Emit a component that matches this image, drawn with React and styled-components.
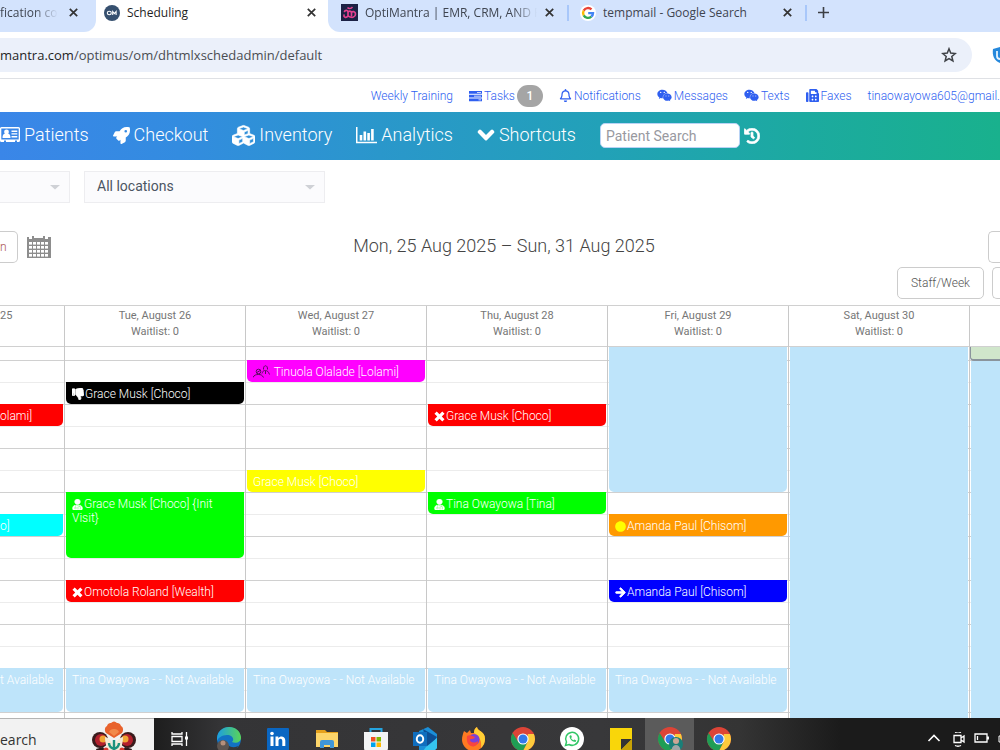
import React from "react";
import styled, { createGlobalStyle, css } from "styled-components";
import { FaRocket, FaCubes, FaChevronDown, FaHistory, FaRegBell, FaWeixin, FaFax, FaThumbsDown, FaUserMd, FaCircle, FaArrowRight } from "react-icons/fa";

const Global = createGlobalStyle`
  *, *::before, *::after { box-sizing: border-box; }
  body { margin: 0; background: #fff; font-family: Roboto, "Liberation Sans", sans-serif; }
  button, input, select { font: inherit; color: inherit; margin: 0; padding: 0; border: 0; background: none; }
  a { text-decoration: none; color: inherit; }
  svg { display: block; flex: none; }
`;

const Screen = styled.div`
  display: flex;
  flex-direction: column;
  min-height: 100vh;
  overflow: hidden;
`;

/* ---------- browser chrome ---------- */

const TabStrip = styled.div`
  display: flex;
  height: 32px;
  font-family: "Open Sans", "Noto Sans", sans-serif;
  font-size: 12px;
  color: #3f4550;
`;

const StripPart = styled.div`
  display: flex;
  align-items: center;
  background: #d3e3fd;
  padding-bottom: 7px;
  border-radius: ${(p) => (p.$side === "left" ? "0 0 12px 0" : "0 0 0 12px")};
  ${(p) => (p.$side === "left" ? "width: 96px; padding-right: 16px;" : "flex: 1; min-width: 0; padding-left: 13px;")}
`;

const ActiveTab = styled.div`
  display: flex;
  align-items: center;
  width: 232px;
  padding: 0 10px 7px 8px;
  color: #1f1f1f;
  background: #fff;
  border-radius: 6px 6px 0 0;
`;

const TabTitle = styled.span`
  flex: ${(p) => (p.$width ? "none" : "1")};
  width: ${(p) => (p.$width ? p.$width + "px" : "auto")};
  min-width: 0;
  margin-left: ${(p) => (p.$flush ? "0" : "7px")};
  overflow: hidden;
  white-space: nowrap;
  line-height: 18px;
  ${(p) => p.$fade && css`mask-image: linear-gradient(90deg, #000 ${p.$fade}px, transparent ${p.$fade + 24}px);`}
`;

const IconButton = styled.button`
  display: flex;
  align-items: center;
  justify-content: center;
  width: 14px;
  height: 18px;
  flex: none;
  color: #333;
`;

const Divider = styled.span`
  width: 2px;
  height: 16px;
  margin: 0 ${(p) => p.$after}px 0 11px;
  background: #a8c7fa;
`;

const Favicon = styled.span`
  display: flex;
  flex: none;
`;

const Toolbar = styled.div`
  display: flex;
  align-items: center;
  justify-content: space-between;
  height: 47px;
  border-bottom: 1px solid #dfe1e5;
  font-family: "Open Sans", "Noto Sans", sans-serif;
  font-size: 13px;
`;

const Omnibox = styled.div`
  display: flex;
  align-items: center;
  flex: 1;
  height: 34px;
  margin-right: 20px;
  padding-right: 16px;
  background: #ebf0fa;
  border-radius: 0 17px 17px 0;
  color: #1f1f1f;
`;

const UrlPath = styled.input`
  flex: 1;
  min-width: 0;
  color: #4a4d52;
  outline: none;
`;

/* ---------- application header ---------- */

const LinkBar = styled.nav`
  display: flex;
  align-items: center;
  justify-content: flex-end;
  gap: 16px;
  height: 33px;
  font-size: 12px;
  font-weight: 300;
  color: #2f5ff0;
  white-space: nowrap;
`;

const TopLink = styled.a`
  display: flex;
  align-items: center;
  gap: 2px;
`;

const Badge = styled.span`
  width: 26px;
  line-height: 22px;
  border-radius: 11px;
  background: #a5a5a5;
  color: #fff;
  font-weight: 500;
  text-align: center;
`;

const MainNav = styled.nav`
  display: flex;
  align-items: center;
  gap: 24px;
  height: 48px;
  padding-bottom: 1px;
  font-size: 18px;
  font-weight: 300;
  color: #fff;
  background: linear-gradient(90deg, #3a86e8 0%, #338ce0 18%, #2a97cb 38%, #22a1b8 60%, #1caaa0 80%, #19b18d 100%);
`;

const NavLink = styled.a`
  display: flex;
  align-items: center;
  gap: 4px;
  line-height: 20px;
  padding-bottom: 1px;
`;

const PatientSearch = styled.form`
  display: flex;
  align-items: center;
  gap: 4px;
  input {
    width: 140px;
    height: 25px;
    padding: 0 5px;
    border: 1px solid #b9d3f5;
    border-radius: 5px;
    background: #fff;
    font-size: 14px;
    font-weight: 400;
  }
  input::placeholder { color: #98999f; opacity: 1; }
`;

/* ---------- filters and calendar toolbar ---------- */

const Filters = styled.div`
  display: flex;
  gap: 14px;
  padding-top: 11px;
`;

const Picker = styled.label`
  display: grid;
  align-items: center;
  width: ${(p) => p.$width}px;
  height: 32px;
  background: #fbfbfd;
  border: 1px solid #ededf0;
  border-left-width: ${(p) => (p.$cut ? 0 : 1)}px;
  > * { grid-area: 1 / 1; }
  svg { justify-self: end; margin-right: 9px; pointer-events: none; }
`;

const Select = styled.select`
  appearance: none;
  width: 100%;
  height: 30px;
  padding: 0 12px 2px;
  font-size: 14px;
  color: #4b5563;
`;

const CalendarBar = styled.div`
  display: grid;
  grid-template-columns: 1fr auto 1fr;
  align-items: center;
  margin-top: 28px;
`;

const BarSide = styled.div`
  display: flex;
  align-items: center;
  gap: 9px;
  justify-content: ${(p) => (p.$end ? "flex-end" : "flex-start")};
`;

const RangeTitle = styled.h1`
  margin: 0;
  padding: 0 0 2px 8px;
  font-size: 18px;
  font-weight: 300;
  line-height: 22px;
  color: #444;
`;

const OutlineButton = styled.button`
  width: ${(p) => p.$width}px;
  height: 32px;
  border: 1px solid #ccc;
  border-radius: 5px;
  font-size: 12px;
  font-weight: 300;
  color: #555;
  text-align: center;
  ${(p) => p.$cut === "left" && css`border-left: 0; border-radius: 0 5px 5px 0; text-align: left; color: #a55;`}
  ${(p) => p.$cut === "right" && css`border-right: 0; border-radius: 5px 0 0 5px;`}
`;

const ViewRow = styled.div`
  display: flex;
  justify-content: flex-end;
  gap: 8px;
  margin: 4px 0 6px;
`;

/* ---------- calendar ---------- */

const Week = styled.main`
  display: grid;
  grid-template-columns: 65fr repeat(5, 181fr) 30fr;
  border-top: 1px solid #d0d0d0;
`;

const Day = styled.section`
  min-width: 0;
  overflow: hidden;
  border-right: 1px solid #c8c8c8;
  &:last-child { border-right: 0; }
`;

const DayHead = styled.header`
  height: 41px;
  padding-top: 2px;
  border-bottom: 1px solid #d0d0d0;
  font-size: 11px;
  line-height: 16px;
  color: #767676;
  text-align: ${(p) => (p.$cut ? "left" : "center")};
  white-space: nowrap;
`;

const DayBody = styled.div`
  display: grid;
  grid-template-rows: 14px repeat(16, 22px) 5px;
  grid-template-columns: minmax(0, 1fr);
`;

const Slot = styled.div`
  grid-column: 1;
  grid-row: ${(p) => p.$row};
  border-bottom: ${(p) => (p.$row > 17 ? "0" : "1px")} solid ${(p) => (p.$row % 2 ? "#d0d0d0" : "#ececec")};
`;

const Event = styled.article`
  z-index: 1;
  grid-column: 1;
  grid-row: ${(p) => p.$row} / span ${(p) => p.$span || 1};
  margin: ${(p) => (p.$row === 1 ? "0 1px 1px" : "-1px 1px 1px")};
  padding: 5px 6px 0;
  overflow: hidden;
  border-radius: 0 0 5px 5px;
  background: ${(p) => p.$color};
  color: #fff;
  font-size: 12px;
  font-weight: 300;
  line-height: 14px;
  ${(p) => p.$cut && css`margin-left: 0; padding-left: 0; border-radius: 0 0 5px 0; white-space: nowrap;`}
  ${(p) => p.$full && css`margin-bottom: 0; border-radius: 0;`}
  ${(p) => p.$bleed && css`margin-right: 0; margin-top: 0;`}
  svg { display: inline-block; vertical-align: -2px; margin-right: 1px; }
`;

const ClosedStrip = styled.div`
  z-index: 1;
  grid-column: 1;
  grid-row: 1;
  background: #d0e6cb;
  border: solid #8a949c;
  border-width: 0 0 2px 1px;
  border-radius: 0 0 0 4px;
`;

/* ---------- desktop taskbar ---------- */

const Taskbar = styled.footer`
  display: flex;
  height: 32px;
  overflow: hidden;
  background: linear-gradient(90deg, #1c1c1c 15%, #343436 22%, #38383a 60%, #343434 74%, #1b1b1b 84%);
  font-family: "Open Sans", "Noto Sans", sans-serif;
`;

const SearchBox = styled.button`
  display: flex;
  justify-content: space-between;
  width: 154px;
  flex: none;
  padding: 2px 18px 0 0;
  background: #f2f2f2;
  border-top: 1px solid #b4b4b4;
  color: #333;
  font-size: 14px;
  line-height: 38px;
`;

const Apps = styled.div`
  display: flex;
  flex: none;
  padding-left: 1px;
`;

const TaskItem = styled.button`
  display: flex;
  justify-content: center;
  flex: none;
  width: 49px;
  height: 40px;
  padding-top: 9px;
  background: ${(p) => (p.$active ? "#5b5b5b" : "transparent")};
`;

const Tray = styled.div`
  display: flex;
  gap: 8px;
  margin-left: auto;
  padding-top: 14px;
`;

/* ---------- drawings ---------- */

const Cross = () => (
  <svg width="9" height="9" viewBox="0 0 9 9" stroke="currentColor" strokeWidth="1.7"><path d="M.8.8l7.4 7.4M8.2.8L.8 8.2" /></svg>
);
const Cancelled = () => (
  <svg width="11" height="11" viewBox="0 0 11 11" stroke="currentColor" strokeWidth="3.2"><path d="M1.600 1.600l7.800 7.800M9.400 1.600L1.600 9.400" /></svg>
);
const OmRound = () => (
  <svg width="16" height="16" viewBox="0 0 16 16"><circle cx="8" cy="8" r="8" fill="#36506f" /><ellipse cx="5.3" cy="8" rx="2" ry="1.7" fill="none" stroke="#fff" strokeWidth="1.1" /><path d="M8.7 10V6.5l1.7 2.2 1.7-2.2V10" fill="none" stroke="#fff" strokeWidth="1.1" /></svg>
);
const OmSquare = () => (
  <svg width="17" height="17" viewBox="0 0 17 17"><path fill="#1b2145" d="M0 0h17v17H0z" /><path d="M3.500 7.500c.5-1.500 3.500-1.500 3.500.5V12c-2 2.500-4.500 1-4-1M7 8.500c.5-2 3.500-2 3.500.5v2.500M10.500 9c.5-2.500 4-1.500 4 1 0 3-3 4.500-7.500 2" fill="none" stroke="#e2408f" strokeWidth="1.700" strokeLinecap="round" /><path d="M6.500 3.500c1 1.500 3.500 1.500 5-.5" fill="none" stroke="#e2408f" strokeWidth="1.400" /></svg>
);
const Google = () => (
  <svg width="16" height="16" viewBox="0 0 16 16"><circle cx="8" cy="8" r="8" fill="#fff" /><g fill="none" strokeWidth="2.400"><path stroke="#ea4335" d="M3.700 5.600A5 5 0 0 1 11.500 4.400" /><path stroke="#fbbc05" d="M3.700 5.600a5 5 0 0 0 0 4.800" /><path stroke="#34a853" d="M3.700 10.400a5 5 0 0 0 7.600 1.300" /><path stroke="#4285f4" d="M11.300 11.700A5 5 0 0 0 13 8.100H8.200" /></g></svg>
);
const Plus = () => (
  <svg width="11" height="11" viewBox="0 0 11 11" stroke="#3c3f44" strokeWidth="1.600"><path d="M5.500 0v11M0 5.500h11" /></svg>
);
const Star = () => (
  <svg width="16" height="16" viewBox="0 0 16 16" fill="none" stroke="#3f4247" strokeWidth="1.500"><path d="M8 1.800l1.700 4.300 4.600.4-3.500 3 1.100 4.500L8 11.600 4.100 14l1.100-4.500-3.500-3 4.600-.4z" /></svg>
);
const Shield = () => (
  <svg width="8" height="18" viewBox="0 0 8 18"><path d="M8 1L1 3C0 9 2 15 8 17z" fill="#2588dc" /><path d="M5 5v5c0 2 1.500 3 3 3" fill="none" stroke="#e4f3ff" strokeWidth="1.800" /></svg>
);
const TasksIcon = () => (
  <svg width="13" height="12" viewBox="0 0 13 12" fill="currentColor"><path d="M0 1h13v2.800H0zM0 4.700h13v2.800H0zM0 8.400h13v2.800H0z" /><path d="M8 2h4v.8H8zM5 5.700h7v.8H5zM9.500 9.400H12v.8H9.500z" fill="#fff" /></svg>
);
const CardIcon = () => (
  <svg width="20" height="16" viewBox="0 0 20 16" fill="currentColor"><path d="M1.500 0h17A1.500 1.500 0 0 1 20 1.500v12a1.500 1.500 0 0 1-1.500 1.500H17v-1.500h-2V15H6v-1.500H4V15H1.500A1.500 1.500 0 0 1 0 13.500v-12A1.500 1.500 0 0 1 1.500 0zM1.300 1.500v11h17.400v-11z" fillRule="evenodd" /><circle cx="6.500" cy="5" r="2.400" /><path d="M2.500 11c0-3 1-4.300 2.500-4.300h3c1.500 0 2.500 1.300 2.500 4.300zM11.500 3.500h5.800v1.400h-5.800zM11.500 6.200h5.800v1.400h-5.800zM11.500 9h5.800v1.400h-5.800z" /></svg>
);
const ChartIcon = () => (
  <svg width="21" height="17" viewBox="0 0 21 17" fill="currentColor"><path d="M0 0h1.500v14.800H21v1.500H0zM3.700 8h2.600v5.500H3.700zM7.500 4.500h2.600v9H7.500zM11.300 6h2.600v7.500h-2.600zM15.100 2h2.600v11.500h-2.600z" /></svg>
);
const Triangle = () => (
  <svg width="10" height="6" viewBox="0 0 10 6"><path d="M0 1h10L5 5.500z" fill="#cfd1d6" /></svg>
);
const CalendarIcon = () => (
  <svg width="24" height="22" viewBox="0 0 24 22"><path fill="#8d8d8d" d="M0 1h2v2h3V0h2v2h9V0h2v3h3V1h3v21H0z" /><g fill="#fff">{[7, 11, 15, 19].map((y) => [2, 6, 10, 14, 18].map((x) => <path key={x + "-" + y} d={`M${x} ${y - 1}h3v2.600h-3z`} />))}</g></svg>
);
const PeopleIcon = () => (
  <svg width="17" height="13" viewBox="0 0 17 13" fill="none" stroke="#5a1060" strokeWidth="1"><circle cx="5.500" cy="6.500" r="2.300" /><path d="M0 12.500c1-2.500 3-3 5.500-3s4 .8 5 3M10.500 4.500c-.5-5 4.500-5 4 0M9 8.500c1-3 2-3 3.500-3s3 1 4 4M12.500 6v3M3 8l5-3" /></svg>
);
const Flowers = () => (
  <svg width="44" height="34" viewBox="0 0 44 34"><circle cx="8" cy="19" r="8" fill="#3a1b1c" /><circle cx="36" cy="19" r="8" fill="#3a1b1c" /><circle cx="9" cy="19" r="6" fill="#b3202d" /><circle cx="35" cy="19" r="6" fill="#b3202d" /><circle cx="11" cy="18" r="3.500" fill="#f0a534" /><circle cx="33" cy="18" r="3.500" fill="#f0a534" /><path d="M13 16c5 1 8 6 9 12 1-6 4-11 9-12 0 9-3 14-9 18-6-4-9-9-9-18z" fill="#f3ead7" /><path d="M14 12c-2-3-1-6 1-7 1-3 3-3 4-3 2-2 4-2 6 0 1 0 3 0 4 3 2 1 3 4 1 7l-8 5z" fill="#e8622c" /><path d="M17 11c1-4 9-4 10 0l-5 4z" fill="#f28a4b" /><path d="M22 34V19m0 9c-3-1-5-3-5-6m5 6c3-1 5-3 5-6" stroke="#1d917d" strokeWidth="2.400" fill="none" /><path d="M4 28l7-2 5 8H6zM40 28l-7-2-5 8h10z" fill="#2c1a1c" /><circle cx="14" cy="29" r="2.500" fill="#d8382f" /><circle cx="30" cy="29" r="2.500" fill="#d8382f" /></svg>
);
const TaskView = () => (
  <svg width="18" height="22" viewBox="0 -3 18 22" fill="none" stroke="#fff" strokeWidth="1.300"><path d="M1 2v2h10V2M1 16v-2h10v2M1 6.500h10v5H1zM15.500 2v14" /><path d="M14 6.500h3v3h-3z" fill="#fff" stroke="none" /></svg>
);
const Edge = () => (
  <svg width="24" height="24" viewBox="0 0 24 24"><defs><linearGradient id="edge" x1="0" x2="1"><stop stopColor="#1b9de2" /><stop offset="1" stopColor="#5ad557" /></linearGradient></defs><circle cx="12" cy="12" r="12" fill="#1272c4" /><path d="M0 11C1-3 22-4 24 10c.5 5-5 7-9 5 3-3 0-7-5-7S1 11 0 14z" fill="url(#edge)" /><path d="M10 13c-1 6 5 9 11 6l-2 5h-9z" fill="#38383a" /><circle cx="6" cy="19" r="6" fill="#5d5551" /><circle cx="6" cy="16" r="2.500" fill="#b58f7b" /></svg>
);
const LinkedIn = () => (
  <svg width="22" height="24" viewBox="0 0 22 24" fill="#fff"><path fill="#0a66c2" d="M1 1h20a1 1 0 0 1 1 1v22H0V2a1 1 0 0 1 1-1z" /><circle cx="5" cy="6.500" r="1.800" /><path d="M3.500 9.500h3V19h-3zM8.500 9.500h2.800V11c1.800-2.600 7-2.200 7 2.500V19h-3v-5c0-3-3.800-3-3.800 0v5h-3z" /></svg>
);
const Explorer = () => (
  <svg width="22" height="24" viewBox="0 0 22 24"><path d="M0 3h9l2 2h11v15H0z" fill="#e5a11c" /><path d="M0 6h22v14H0z" fill="#fcd56a" /><path d="M4 21v-6q0-2 2-2h10q2 0 2 2v6h-4v-3H8v3z" fill="#3f96d8" /></svg>
);
const Store = () => (
  <svg width="24" height="24" viewBox="0 0 24 24"><path d="M6.500 6V2h11v4" fill="none" stroke="#25a4df" strokeWidth="2" /><path d="M0 5h24v16q0 3-3 3H3q-3 0-3-3z" fill="#f3f4f5" /><path d="M7 10h4.500v4.500H7z" fill="#f25022" /><path d="M12.500 10H17v4.500h-4.500z" fill="#7fba00" /><path d="M7 15.500h4.500V20H7z" fill="#00a4ef" /><path d="M12.500 15.500H17V20h-4.500z" fill="#ffb900" /></svg>
);
const Outlook = () => (
  <svg width="24" height="24" viewBox="0 0 24 24"><path d="M6 4l9-4 9 7v14l-3 3H6z" fill="#1b8fd8" /><path d="M10 2l14 8-9 12z" fill="#0d4f95" /><path d="M13 20l11-9v10l-3 3H10z" fill="#35c4ee" /><path d="M0 5h14v14H0z" fill="#106ebe" /><ellipse cx="7" cy="12" rx="3.200" ry="3.700" fill="none" stroke="#fff" strokeWidth="2" /></svg>
);
const Firefox = () => (
  <svg width="24" height="24" viewBox="0 0 24 24"><path d="M2 4l3 2 3-3 1 3h3c0-3 1-5 3-6 0 4 8 4 8 12a11.500 11.500 0 0 1-23 1C0 9 1 7 2 4z" fill="#ff7a22" /><path d="M15 0c0 4 8 4 8 12 0 4-2 7-4 9 1-6-1-12-7-15 0-3 1-5 3-6z" fill="#ffcf35" /><circle cx="12" cy="12.500" r="5.500" fill="#7a41d9" /><path d="M5 9c3-2 5 0 8 1-1 3-5 1-5 3s4 4 8 1c0 8-13 8-11-5z" fill="#f9453f" /></svg>
);
const Chrome = ({ avatar }) => (
  <svg width="26" height="24" viewBox="-1 0 26 24"><circle cx="12" cy="12" r="12" fill="#dc4437" /><path d="M1.600 6A12 12 0 0 0 12 24l4.800-9.200L12 12 7.200 14.800z" fill="#1f9d55" /><path d="M12 24l4.800-9.200V7h6.100A12 12 0 0 1 12 24z" fill="#fdcb3c" /><circle cx="12" cy="12" r="5.600" fill="#fff" /><circle cx="12" cy="12" r="4.500" fill="#3379ea" />{avatar && (<g><circle cx="18" cy="17" r="7" fill="#197f78" /><circle cx="18" cy="14" r="3" fill="#caa695" /><path d="M13.500 24c0-8 9-8 9 0z" fill="#9ea6a6" /></g>)}</svg>
);
const WhatsApp = () => (
  <svg width="24" height="24" viewBox="0 0 24 24"><circle cx="12" cy="12" r="12" fill="#fff" /><path d="M5.500 18.500l1-3.500a6.500 6.500 0 1 1 2.500 2.500z" fill="none" stroke="#32c767" strokeWidth="1.500" /><path d="M9.500 9c0 3 3 6 6 6l.8-1.500-2-1-1 .8c-1-.4-1.800-1.300-2.200-2.200l.8-1-.9-2z" fill="#32c767" /></svg>
);
const Notes = () => (
  <svg width="22" height="24" viewBox="0 0 22 24"><path d="M0 1h22v23H0z" fill="#f9d60a" /><path d="M11 12h11L11 23z" fill="#343434" /><path d="M22 12v12H11v-1z" fill="#c7a206" /></svg>
);
const CaretUp = () => (
  <svg width="16" height="14" viewBox="-1 0 16 14" fill="none" stroke="#fff" strokeWidth="1.600"><path d="M1.500 9L7 3.500 12.500 9" /></svg>
);
const MeetNow = () => (
  <svg width="16" height="16" viewBox="-1 1 16 16" fill="none" stroke="#fff" strokeWidth="1.300"><path d="M4 1.500Q7 0 10 1.500M4 14.500q3 1.500 6 0M3 4.500h7v7H3zM10 7l3-2v6l-3-2" /></svg>
);
const Battery = () => (
  <svg width="16" height="14" viewBox="0 0 16 14" fill="none" stroke="#fff" strokeWidth="1.300"><path d="M1 2h12v8H1zM14.300 4.500v3M3.500 4v4" /></svg>
);
const TrayEdge = () => (
  <svg width="2" height="14" viewBox="0 0 2 14" fill="none" stroke="#fff"><path d="M2 4H1v6h1" /></svg>
);

/* ---------- data ---------- */

const BUSY = "#bee4fa";
const away = { row: 16, span: 2, color: BUSY, text: "Tina Owayowa - - Not Available" };

const days = [
  { head: "25", cut: true, events: [
    { row: 4, color: "#ff0000", text: "olami]" },
    { row: 9, color: "#00ffff", text: "o]" },
    { ...away, text: "t Available" },
  ] },
  { head: "Tue, August 26", events: [
    { row: 3, color: "#000000", icon: <FaThumbsDown size={12} stroke="currentColor" strokeWidth={30} />, text: "Grace Musk [Choco]" },
    { row: 8, span: 3, color: "#00ff00", icon: <FaUserMd size={11} stroke="currentColor" strokeWidth={30} />, text: "Grace Musk [Choco] {Init Visit}" },
    { row: 12, color: "#ff0000", icon: <Cancelled />, text: "Omotola Roland [Wealth]" },
    away,
  ] },
  { head: "Wed, August 27", events: [
    { row: 2, color: "#ff00ff", icon: <PeopleIcon />, text: " Tinuola Olalade [Lolami]" },
    { row: 7, color: "#ffff00", text: "Grace Musk [Choco]" },
    away,
  ] },
  { head: "Thu, August 28", events: [
    { row: 4, color: "#ff0000", icon: <Cancelled />, text: "Grace Musk [Choco]" },
    { row: 8, color: "#00ff00", icon: <FaUserMd size={11} stroke="currentColor" strokeWidth={30} />, text: "Tina Owayowa [Tina]" },
    away,
  ] },
  { head: "Fri, August 29", events: [
    { row: 1, span: 7, color: BUSY, text: "" },
    { row: 9, color: "#ff9900", icon: <FaCircle size={11} color="#ffff00" />, text: "Amanda Paul [Chisom]" },
    { row: 12, color: "#0000ff", icon: <FaArrowRight size={11} stroke="currentColor" strokeWidth={40} />, text: "Amanda Paul [Chisom]" },
    away,
  ] },
  { head: "Sat, August 30", events: [{ row: 1, span: 18, color: BUSY, full: true, text: "" }] },
  { head: "", closed: true, events: [{ row: 2, span: 17, color: BUSY, full: true, text: "" }] },
];

const topLinks = [
  { label: "Weekly Training" },
  { label: "Tasks", icon: <TasksIcon />, badge: 1 },
  { label: "Notifications", icon: <FaRegBell size={13} /> },
  { label: "Messages", icon: <FaWeixin size={15} /> },
  { label: "Texts", icon: <FaWeixin size={15} /> },
  { label: "Faxes", icon: <FaFax size={13} /> },
  { label: "tinaowayowa605@gmail." },
];

const navLinks = [
  { label: "Patients", icon: <CardIcon /> },
  { label: "Checkout", icon: <FaRocket size={17} /> },
  { label: "Inventory", icon: <FaCubes size={23} stroke="currentColor" strokeWidth={14} /> },
  { label: "Analytics", icon: <ChartIcon /> },
  { label: "Shortcuts", icon: <FaChevronDown size={18} stroke="currentColor" strokeWidth={40} /> },
];

const apps = [
  ["Task View", <TaskView />], ["Edge", <Edge />], ["LinkedIn", <LinkedIn />], ["File Explorer", <Explorer />],
  ["Store", <Store />], ["Outlook", <Outlook />], ["Firefox", <Firefox />], ["Chrome", <Chrome />],
  ["WhatsApp", <WhatsApp />], ["Notes", <Notes />], ["Chrome profile", <Chrome avatar />, true], ["Chrome window", <Chrome />],
];

const DayColumn = ({ day }) => (
  <Day>
    <DayHead $cut={day.cut}>
      {day.head}
      {day.head && !day.cut && (<><br />Waitlist: 0</>)}
    </DayHead>
    <DayBody>
      {Array.from({ length: 18 }, (_, i) => <Slot key={i} $row={i + 1} />)}
      {day.closed && <ClosedStrip />}
      {day.events.map((e) => (
        <Event key={e.row} $row={e.row} $span={e.span} $color={e.color} $cut={day.cut} $full={e.full} $bleed={day.closed}>
          {e.icon}{e.text}
        </Event>
      ))}
    </DayBody>
  </Day>
);

export default function App() {
  return (
    <Screen>
      <Global />
      <TabStrip>
        <StripPart $side="left">
          <TabTitle $flush $fade={34} $width={66}>fication co</TabTitle>
          <IconButton aria-label="Close tab"><Cross /></IconButton>
        </StripPart>
        <ActiveTab>
          <Favicon><OmRound /></Favicon>
          <TabTitle>Scheduling</TabTitle>
          <IconButton aria-label="Close tab"><Cross /></IconButton>
        </ActiveTab>
        <StripPart $side="right">
          <Favicon><OmSquare /></Favicon>
          <TabTitle $fade={148} $width={177}>OptiMantra | EMR, CRM, AND P</TabTitle>
          <IconButton aria-label="Close tab"><Cross /></IconButton>
          <Divider $after={11} />
          <Favicon><Google /></Favicon>
          <TabTitle $width={177}>tempmail - Google Search</TabTitle>
          <IconButton aria-label="Close tab"><Cross /></IconButton>
          <Divider $after={9} />
          <IconButton aria-label="New tab"><Plus /></IconButton>
        </StripPart>
      </TabStrip>
      <Toolbar>
        <Omnibox>
          <span>mantra.com</span>
          <UrlPath aria-label="Address" defaultValue="/optimus/om/dhtmlxschedadmin/default" />
          <IconButton aria-label="Bookmark"><Star /></IconButton>
        </Omnibox>
        <Shield />
      </Toolbar>

      <LinkBar>
        {topLinks.map((l) => (
          <TopLink key={l.label} href="#">{l.icon}{l.label}{l.badge && <Badge>{l.badge}</Badge>}</TopLink>
        ))}
      </LinkBar>
      <MainNav>
        {navLinks.map((l) => <NavLink key={l.label} href="#">{l.icon}{l.label}</NavLink>)}
        <PatientSearch>
          <input aria-label="Patient Search" placeholder="Patient Search" />
          <FaHistory size={16} stroke="currentColor" strokeWidth={24} />
        </PatientSearch>
      </MainNav>

      <Filters>
        <Picker $width={70} $cut><Select aria-label="Staff"><option></option></Select><Triangle /></Picker>
        <Picker $width={241}><Select aria-label="Location"><option>All locations</option></Select><Triangle /></Picker>
      </Filters>
      <CalendarBar>
        <BarSide>
          <OutlineButton $width={18} $cut="left">n</OutlineButton>
          <CalendarIcon />
        </BarSide>
        <RangeTitle>Mon, 25 Aug 2025 – Sun, 31 Aug 2025</RangeTitle>
        <BarSide $end><OutlineButton $width={12} $cut="right" aria-label="Previous" /></BarSide>
      </CalendarBar>
      <ViewRow>
        <OutlineButton $width={87}>Staff/Week</OutlineButton>
        <OutlineButton $width={8} $cut="right" aria-label="Next view" />
      </ViewRow>

      <Week>{days.map((d, i) => <DayColumn key={i} day={d} />)}</Week>

      <Taskbar>
        <SearchBox><span>earch</span><Flowers /></SearchBox>
        <Apps>
          {apps.map(([name, icon, active]) => <TaskItem key={name} aria-label={name} $active={active}>{icon}</TaskItem>)}
        </Apps>
        <Tray><CaretUp /><MeetNow /><Battery /><TrayEdge /></Tray>
      </Taskbar>
    </Screen>
  );
}
